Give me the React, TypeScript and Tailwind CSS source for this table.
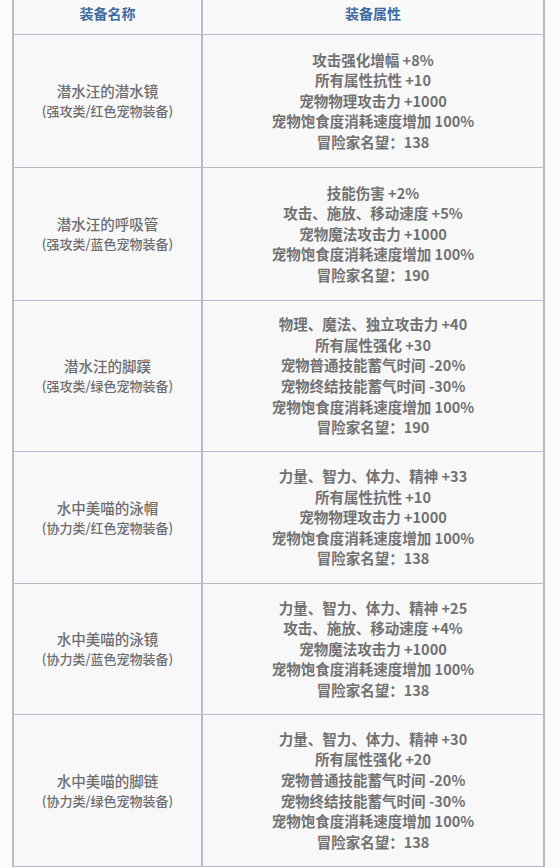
import React from "react";

type Row = { name: string; sub: string; attrs: string[]; h: string };

const rows: Row[] = [
  {
    name: "潜水汪的潜水镜",
    sub: "(强攻类/红色宠物装备)",
    attrs: ["攻击强化增幅 +8%", "所有属性抗性 +10", "宠物物理攻击力 +1000", "宠物饱食度消耗速度增加 100%", "冒险家名望：138"],
    h: "h-[133px]",
  },
  {
    name: "潜水汪的呼吸管",
    sub: "(强攻类/蓝色宠物装备)",
    attrs: ["技能伤害 +2%", "攻击、施放、移动速度 +5%", "宠物魔法攻击力 +1000", "宠物饱食度消耗速度增加 100%", "冒险家名望：190"],
    h: "h-[133px]",
  },
  {
    name: "潜水汪的脚蹼",
    sub: "(强攻类/绿色宠物装备)",
    attrs: [
      "物理、魔法、独立攻击力 +40",
      "所有属性强化 +30",
      "宠物普通技能蓄气时间 -20%",
      "宠物终结技能蓄气时间 -30%",
      "宠物饱食度消耗速度增加 100%",
      "冒险家名望：190",
    ],
    h: "h-[151px]",
  },
  {
    name: "水中美喵的泳帽",
    sub: "(协力类/红色宠物装备)",
    attrs: ["力量、智力、体力、精神 +33", "所有属性抗性 +10", "宠物物理攻击力 +1000", "宠物饱食度消耗速度增加 100%", "冒险家名望：138"],
    h: "h-[132px]",
  },
  {
    name: "水中美喵的泳镜",
    sub: "(协力类/蓝色宠物装备)",
    attrs: ["力量、智力、体力、精神 +25", "攻击、施放、移动速度 +4%", "宠物魔法攻击力 +1000", "宠物饱食度消耗速度增加 100%", "冒险家名望：138"],
    h: "h-[131px]",
  },
  {
    name: "水中美喵的脚链",
    sub: "(协力类/绿色宠物装备)",
    attrs: [
      "力量、智力、体力、精神 +30",
      "所有属性强化 +20",
      "宠物普通技能蓄气时间 -20%",
      "宠物终结技能蓄气时间 -30%",
      "宠物饱食度消耗速度增加 100%",
      "冒险家名望：138",
    ],
    h: "h-[151px]",
  },
];

export default function App() {
  return (
    <div
      className="w-[560px] h-[868px] overflow-hidden bg-[#fbfbfb] pl-[12px]"
      style={{ fontFamily: '"Noto Sans CJK SC", "Noto Sans", sans-serif' }}
    >
      <div className="w-[533px] border-l-2 border-r-2 border-b border-[#b3bcc8] bg-[#f8f8f9]">
        {/* header */}
        <div className="flex h-[35px] border-b border-[#b3bcc8] bg-[#f9f9fa]">
          <div className="w-[189px] border-r-2 border-[#b3bcc8] flex justify-center pt-[3px] text-[14px] leading-[20px] font-bold text-[#3f6c9f]">
            装备名称
          </div>
          <div className="flex-1 flex justify-center pt-[3px] text-[14px] leading-[20px] font-bold text-[#3f6c9f]">
            装备属性
          </div>
        </div>
        {rows.map((r, i) => (
          <div
            key={i}
            className={`flex ${r.h} ${i < rows.length - 1 ? "border-b border-[#b3bcc8]" : ""}`}
          >
            <div className="w-[189px] border-r-2 border-[#b3bcc8] flex flex-col items-center justify-center text-[#6e6e6e]">
              <div className="text-[14.5px] leading-[20px] font-medium">{r.name}</div>
              <div className="text-[13px] leading-[20px] font-medium">{r.sub}</div>
            </div>
            <div className="flex-1 flex flex-col items-center justify-center text-[#727272] text-[14.5px] leading-[20.6px] font-semibold">
              {r.attrs.map((a, j) => (
                <div key={j} className="whitespace-nowrap">
                  {a}
                </div>
              ))}
            </div>
          </div>
        ))}
      </div>
    </div>
  );
}
